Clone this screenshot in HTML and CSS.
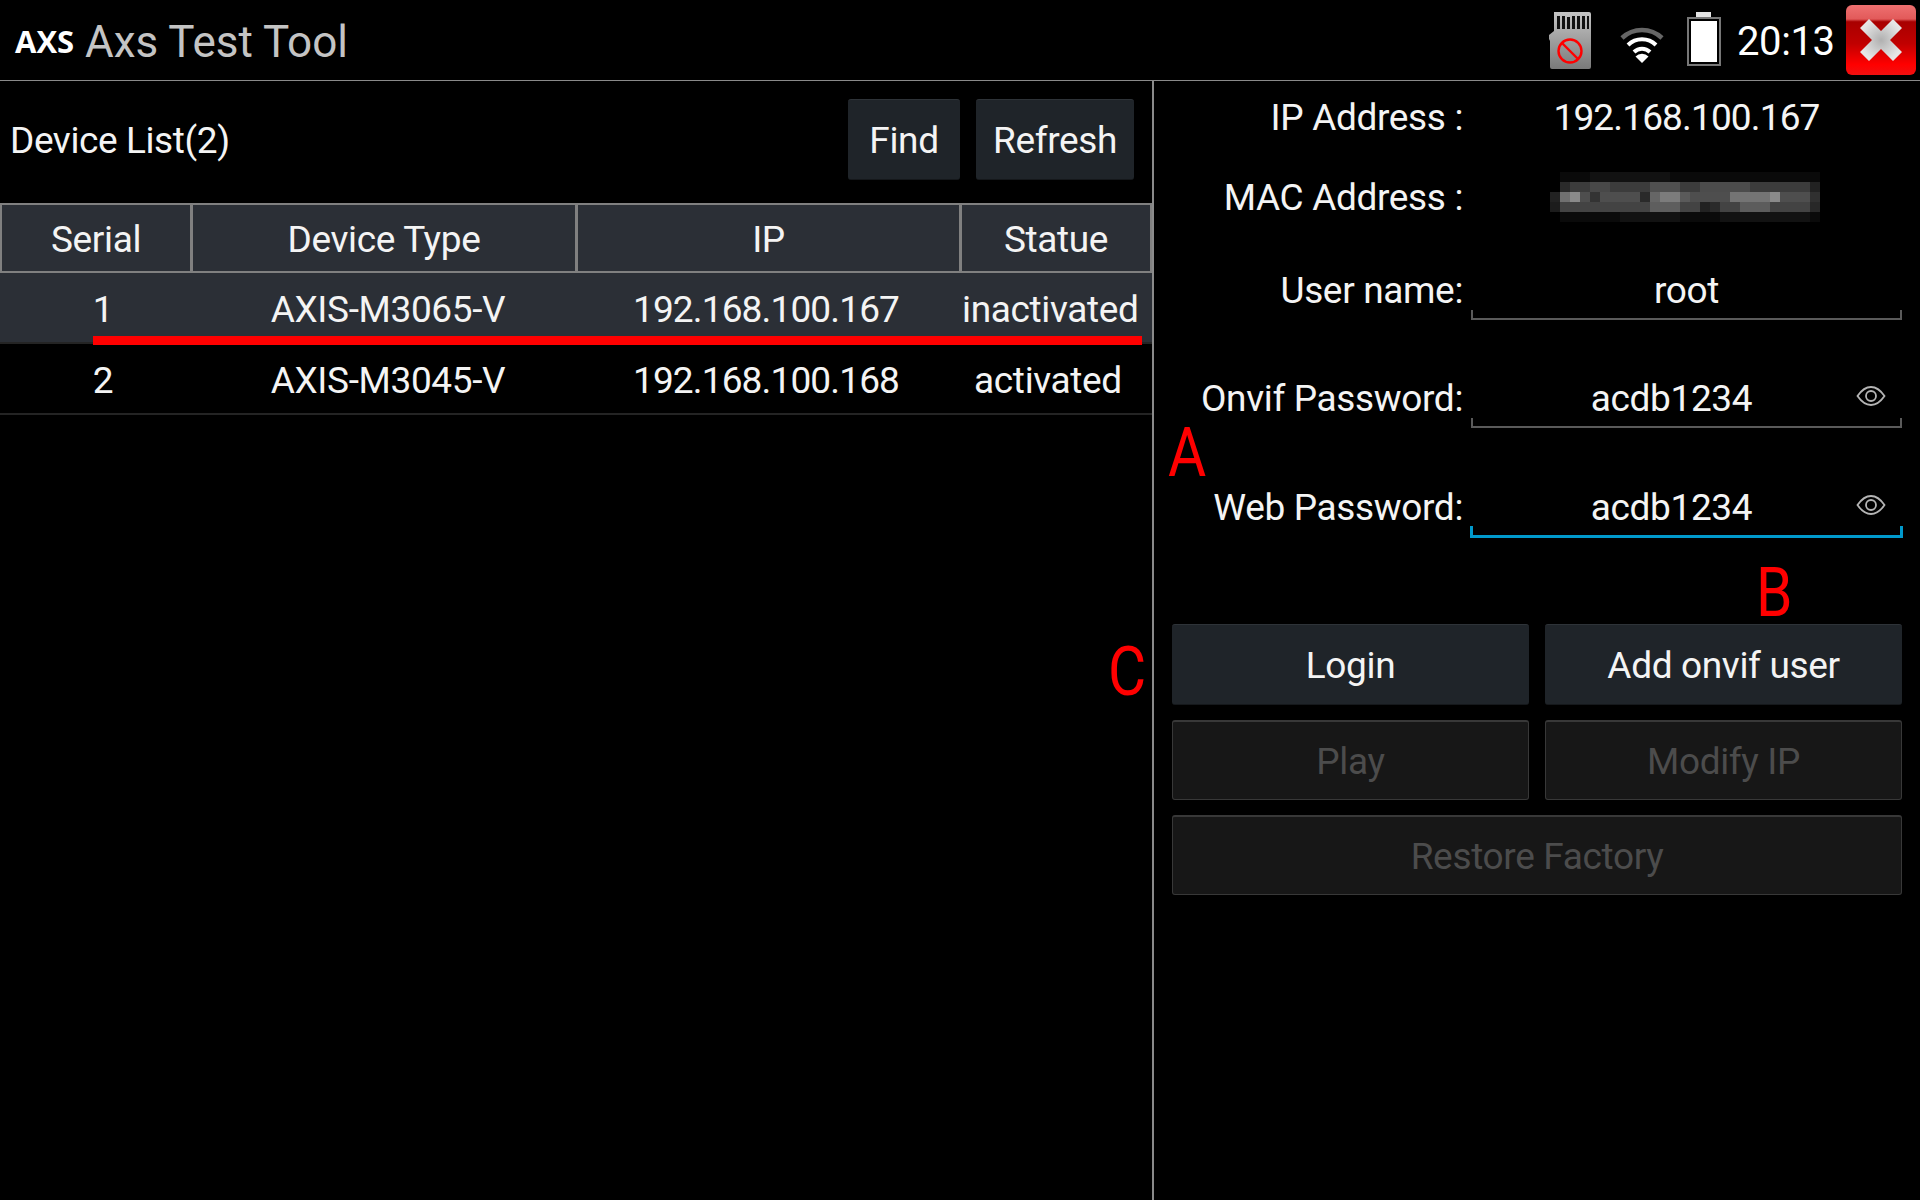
FILE: index.html
```html
<!DOCTYPE html>
<html lang="en">
<head>
<meta charset="utf-8">
<title>Axs Test Tool</title>
<link rel="stylesheet" href="styles.css">
</head>
<body>
<div class="app">
  <header class="topbar">
    <div class="brand"><span class="logo">AXS</span><span class="app-title">Axs Test Tool</span></div>
    <div class="status">
      <svg class="ic-sd" width="42" height="57" viewBox="0 0 42 57">
        <defs><linearGradient id="sdg" x1="0" y1="0" x2="0" y2="1"><stop offset="0" stop-color="#c4c4c4"/><stop offset="1" stop-color="#7a7a7a"/></linearGradient></defs>
        <path d="M5 0H40a2 2 0 0 1 2 2V55a2 2 0 0 1-2 2H3a2 2 0 0 1-2-2V29L0 27V23L5 19Z" fill="url(#sdg)"/>
        <path d="M8 4h3v13H8zM13 4h3v13h-3zM18 5h3v12h-3zM23 4h3v13h-3zM28 4h3v13h-3zM33 4h3v13h-3zM38 4h2v13h-2z" fill="#111"/>
        <circle cx="21" cy="39" r="11.500" fill="none" stroke="#f00" stroke-width="2.400"/>
        <path d="M13 31L29 47" stroke="#f00" stroke-width="2.400"/>
      </svg>
      <svg class="ic-wifi" width="44" height="37" viewBox="0 0 44 37">
        <path d="M2 12A29 29 0 0 1 42 12" fill="none" stroke="#666" stroke-width="4.500"/>
        <path d="M8 19A20 20 0 0 1 36 19" fill="none" stroke="#fff" stroke-width="4"/>
        <path d="M14 26A11.500 11.500 0 0 1 30 26" fill="none" stroke="#fff" stroke-width="4"/>
        <path d="M15.500 30.500A9 9 0 0 1 28.500 30.500L22 37Z" fill="#fff"/>
      </svg>
      <svg class="ic-batt" width="34" height="54" viewBox="0 0 34 54">
        <rect x="9" y="0" width="15" height="5" fill="#e4e4e4"/>
        <rect x="1" y="6" width="32" height="47" fill="#000" stroke="#777" stroke-width="2"/>
        <rect x="4" y="9" width="26" height="41" fill="#fff"/>
      </svg>
      <span class="clock">20:13</span>
      <div class="close-btn">
        <svg width="42" height="42" viewBox="0 0 42 42">
          <defs><radialGradient id="xg"><stop offset="0" stop-color="#b0b0b0"/><stop offset="1" stop-color="#e6e6e6"/></radialGradient></defs>
          <path d="M9 0L21 12L33 0L42 9L30 21L42 33L33 42L21 30L9 42L0 33L12 21L0 9Z" fill="url(#xg)"/>
        </svg>
      </div>
    </div>
  </header>

  <main class="content">
    <section class="left">
      <div class="list-head">
        <span class="list-title">Device List(2)</span>
        <div class="list-actions">
          <div class="btn btn-find">Find</div>
          <div class="btn btn-refresh">Refresh</div>
        </div>
      </div>
      <div class="thead">
        <div class="th">Serial</div>
        <div class="th">Device Type</div>
        <div class="th">IP</div>
        <div class="th">Statue</div>
      </div>
      <div class="trow trow-sel">
        <div>1</div><div>AXIS-M3065-V</div><div class="num">192.168.100.167</div><div>inactivated</div>
        <div class="sel-line"></div>
      </div>
      <div class="trow">
        <div>2</div><div>AXIS-M3045-V</div><div class="num">192.168.100.168</div><div>activated</div>
      </div>
    </section>

    <section class="right">
      <div class="info-row">
        <span class="label">IP Address :</span><span class="value num">192.168.100.167</span>
      </div>
      <div class="info-row">
        <span class="label">MAC Address :</span>
        <span class="value">
          <svg class="mac-blur" width="270" height="50" viewBox="0 0 27 5" shape-rendering="crispEdges">
            <g fill="#0a0a0a"><rect x="1" y="0" width="26" height="1"/><rect x="1" y="4" width="26" height="1"/></g>
            <g fill="#121212"><rect x="7" y="4" width="6" height="1"/><rect x="17" y="4" width="9" height="1"/><rect x="4" y="0" width="8" height="1"/></g>
            <rect x="1" y="1" width="26" height="1" fill="#3c3c3c"/>
            <rect x="1" y="1" width="1" height="1" fill="#2a2a2a"/><rect x="4" y="1" width="2" height="1" fill="#484848"/><rect x="10" y="1" width="3" height="1" fill="#505050"/><rect x="15" y="1" width="5" height="1" fill="#4c4c4c"/><rect x="26" y="1" width="1" height="1" fill="#222"/>
            <rect x="0" y="2" width="27" height="1" fill="#4e4e4e"/>
            <rect x="0" y="2" width="1" height="1" fill="#222"/><rect x="1" y="2" width="1" height="1" fill="#707070"/><rect x="2" y="2" width="1" height="1" fill="#8a8a8a"/><rect x="4" y="2" width="1" height="1" fill="#333"/><rect x="9" y="2" width="1" height="1" fill="#2a2a2a"/><rect x="10" y="2" width="1" height="1" fill="#666"/><rect x="11" y="2" width="2" height="1" fill="#7c7c7c"/><rect x="13" y="2" width="1" height="1" fill="#5a5a5a"/><rect x="18" y="2" width="4" height="1" fill="#747474"/><rect x="22" y="2" width="1" height="1" fill="#8a8a8a"/><rect x="26" y="2" width="1" height="1" fill="#303030"/>
            <rect x="0" y="3" width="27" height="1" fill="#434343"/>
            <rect x="0" y="3" width="1" height="1" fill="#1c1c1c"/><rect x="10" y="3" width="3" height="1" fill="#5e5e5e"/><rect x="15" y="3" width="1" height="1" fill="#222"/><rect x="16" y="3" width="1" height="1" fill="#2a2a2a"/><rect x="19" y="3" width="3" height="1" fill="#5c5c5c"/><rect x="26" y="3" width="1" height="1" fill="#282828"/>
          </svg>
        </span>
      </div>
      <div class="field-row field-first">
        <span class="label">User name:</span>
        <div class="field">root</div>
      </div>
      <div class="field-row">
        <span class="label">Onvif Password:</span>
        <div class="field field-pw">acdb1234
          <svg class="eye" width="30" height="20" viewBox="0 0 30 20"><path d="M1.500 10C6 3.500 10.500 1 15 1S24 3.500 28.500 10C24 16.500 19.500 19 15 19S6 16.500 1.500 10Z" fill="none" stroke="#b4b4b4" stroke-width="1.800"/><circle cx="15" cy="10" r="5" fill="none" stroke="#b4b4b4" stroke-width="1.800"/></svg>
        </div>
      </div>
      <div class="field-row">
        <span class="label">Web Password:</span>
        <div class="field field-pw field-focus">acdb1234
          <svg class="eye" width="30" height="20" viewBox="0 0 30 20"><path d="M1.500 10C6 3.500 10.500 1 15 1S24 3.500 28.500 10C24 16.500 19.500 19 15 19S6 16.500 1.500 10Z" fill="none" stroke="#b4b4b4" stroke-width="1.800"/><circle cx="15" cy="10" r="5" fill="none" stroke="#b4b4b4" stroke-width="1.800"/></svg>
        </div>
      </div>
      <div class="actions">
        <div class="btn">Login</div>
        <div class="btn">Add onvif user</div>
        <div class="btn btn-off">Play</div>
        <div class="btn btn-off">Modify IP</div>
        <div class="btn btn-off btn-wide">Restore Factory</div>
      </div>
    </section>
  </main>

  <span class="mark mark-a">A</span>
  <span class="mark mark-b">B</span>
  <span class="mark mark-c">C</span>
</div>
</body>
</html>
```

FILE: styles.css
```css
* { box-sizing: border-box; }
html, body { margin: 0; padding: 0; background: #000; }
body {
  font-family: Roboto, "Liberation Sans", sans-serif;
  font-size: 37px;
  letter-spacing: -0.35px;
  color: #f4f4f4;
}
.app { position: relative; width: 1920px; height: 1200px; overflow: hidden; background: #000; }
.num { letter-spacing: -0.85px; }

.topbar {
  height: 81px;
  border-bottom: 1px solid #8a8a8a;
  display: flex;
  align-items: center;
  justify-content: space-between;
}
.brand { display: flex; align-items: center; padding-left: 15px; padding-top: 2px; }
.logo { font-family: "Open Sans", sans-serif; font-size: 31px; font-weight: 700; color: #fff; width: 70px; letter-spacing: 0; }
.app-title { font-size: 44px; color: #c4c4c4; letter-spacing: 0; padding-top: 1px; }
.status { display: flex; align-items: center; padding-right: 4px; height: 80px; }
.ic-sd { margin-right: 29px; margin-top: 1px; }
.ic-wifi { margin-right: 23px; margin-top: 8px; }
.ic-batt { margin-right: 16px; margin-top: -2px; }
.clock { font-size: 40px; color: #fff; width: 109px; letter-spacing: -0.4px; padding-top: 2px; }
.close-btn {
  width: 70px; height: 70px;
  border-radius: 6px;
  display: flex; align-items: center; justify-content: center;
  background: linear-gradient(#ee7070 0, #e25a5a 20%, #a80000 24%, #c00000 55%, #ff0000 85%, #f01010 100%);
}

.content { display: flex; height: 1119px; }
.left { width: 1152px; flex: none; }
.right { flex: 1; border-left: 2px solid #8a8a8a; padding-left: 18px; padding-right: 17px; }

.list-head {
  height: 122px;
  display: flex;
  justify-content: space-between;
  padding: 18px 18px 23px 10px;
}
.list-title { line-height: 84px; letter-spacing: -0.4px; }
.list-actions { display: flex; gap: 16px; }
.btn {
  height: 81px;
  padding-top: 2px;
  display: flex; align-items: center; justify-content: center;
  background: #1f2429;
  border-top: 1px solid #2e3338;
  border-bottom: 1px solid #15181b;
  border-radius: 3px;
  color: #f4f4f4;
}
.btn-find { width: 112px; }
.btn-refresh { width: 158px; }
.btn-off {
  background: #171717;
  color: #4c4c4c;
  border: 1px solid #383838;
  border-top-width: 2px;
  height: 80px;
}
.btn-wide { grid-column: 1 / 3; }

.thead {
  width: 1152px;
  height: 70px;
  background: #808080;
  padding: 2px;
  display: grid;
  grid-template-columns: 188px 382px 381px 1fr;
  column-gap: 3px;
}
.th { background: #2b2f36; display: flex; align-items: center; justify-content: center; padding-top: 3px; }

.trow {
  position: relative;
  display: grid;
  grid-template-columns: 206px 364px 392px 172px;
  height: 71px;
  padding-top: 4px;
  border-bottom: 2px solid #242424;
  align-items: center;
  text-align: center;
  white-space: nowrap;
}
.trow-sel { background: #2b2f36; }
.sel-line {
  position: absolute;
  left: 93px; top: 63px;
  width: 1049px; height: 9px;
  background: #f00;
}

.info-row, .field-row { display: grid; grid-template-columns: 291px 429px; column-gap: 9px; }
.info-row { height: 72px; margin-bottom: 8px; align-items: center; }
.label { text-align: right; white-space: nowrap; }
.value { text-align: center; display: flex; justify-content: center; }
.mac-blur { display: block; margin-right: 4px; }
.field-row { height: 60px; margin-bottom: 49px; align-items: center; }
.field-first { margin-top: 27px; margin-bottom: 48px; }
.field {
  position: relative;
  height: 60px;
  display: flex; align-items: center; justify-content: center;
}
.field::after {
  content: "";
  position: absolute;
  left: -1px; right: -1px; bottom: 0;
  height: 8px;
  border: 2px solid #5a5a5a;
  border-top: 0;
}
.field-pw { padding-right: 30px; }
.field-focus::after { left: -2px; right: -2px; bottom: -1px; height: 9px; border-color: #0099cc; border-width: 0 3px 3px; }
.eye { position: absolute; right: 15px; top: 18px; }

.actions {
  margin-top: 87px;
  width: 730px;
  display: grid;
  grid-template-columns: 357px 357px;
  column-gap: 16px;
  row-gap: 15px;
}

.mark {
  position: absolute;
  font-size: 69px;
  line-height: 69px;
  letter-spacing: 0;
  color: #f00;
  transform: scaleX(0.85);
  transform-origin: left top;
}
.mark-a { left: 1168px; top: 418px; }
.mark-b { left: 1756px; top: 558px; }
.mark-c { left: 1108px; top: 637px; }
```
